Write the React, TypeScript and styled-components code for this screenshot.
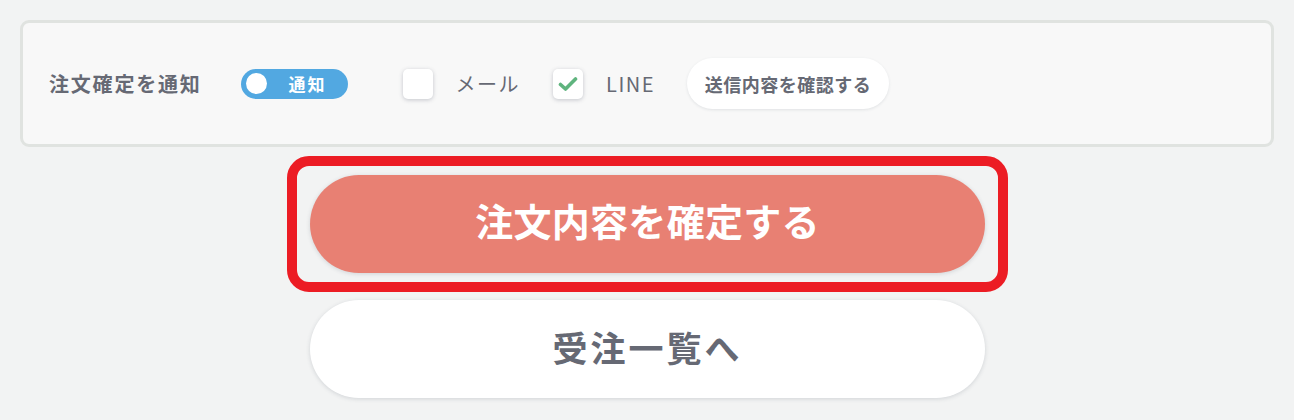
import React from 'react'
import styled, { createGlobalStyle } from 'styled-components'

const COLORS = {
  PAGE: '#f2f3f3',
  PANEL: '#f8f8f8',
  PANEL_BORDER: '#e0e3e0',
  TEXT: '#666974',
  BLUE: '#52a8e1',
  GREEN: '#5fb47e',
  SALMON: '#e88073',
  RED: '#ec1c24',
}

const GlobalStyle = createGlobalStyle`
  html, body {
    margin: 0;
    padding: 0;
    background: ${COLORS.PAGE};
    font-family: "Noto Sans CJK JP", "Noto Sans", sans-serif;
    color: ${COLORS.TEXT};
  }
`

const Page = styled.div`
  padding: 20px;
  display: flex;
  flex-direction: column;
  align-items: center;
`

const Panel = styled.div`
  box-sizing: border-box;
  width: 100%;
  height: 127px;
  display: flex;
  align-items: center;
  padding-left: 26px;
  background: ${COLORS.PANEL};
  border: 3px solid ${COLORS.PANEL_BORDER};
  border-radius: 9px;
`

const Label = styled.div`
  font-size: 20px;
  font-weight: 700;
  letter-spacing: 1.8px;
  margin-right: 39px;
`

const Toggle = styled.div`
  box-sizing: border-box;
  width: 107px;
  height: 30px;
  border-radius: 15px;
  background: ${COLORS.BLUE};
  display: flex;
  align-items: center;
  padding-left: 5px;
  margin-right: 55px;
`

const Knob = styled.div`
  width: 21px;
  height: 21px;
  border-radius: 50%;
  background: #fff;
`

const ToggleText = styled.div`
  color: #fff;
  font-size: 17px;
  font-weight: 700;
  letter-spacing: 2px;
  margin-left: 22px;
`

const Check = styled.div`
  width: 30px;
  height: 30px;
  border-radius: 5px;
  background: #fff;
  box-shadow: 0 1px 4px rgba(60, 70, 90, 0.28);
  display: flex;
  align-items: center;
  justify-content: center;
`

const CheckLabel = styled.div<{ gap: number }>`
  font-size: 20px;
  letter-spacing: 1.5px;
  margin-left: 23px;
  margin-right: ${(p) => p.gap}px;
`

const SmallButton = styled.button`
  box-sizing: border-box;
  width: 202px;
  height: 51px;
  border: none;
  border-radius: 26px;
  background: #fff;
  box-shadow: 0 1px 3px rgba(60, 70, 90, 0.12);
  font-family: inherit;
  font-size: 18px;
  font-weight: 700;
  letter-spacing: 0.5px;
  color: ${COLORS.TEXT};
  padding: 0;
`

const Highlight = styled.div`
  margin-top: 9px;
  border: 10px solid ${COLORS.RED};
  border-radius: 22px;
  padding: 9px 13px;
`

const BigButton = styled.button<{ primary?: boolean }>`
  display: block;
  width: 675px;
  height: 98px;
  border: none;
  border-radius: 49px;
  background: ${(p) => (p.primary ? COLORS.SALMON : '#fff')};
  color: ${(p) => (p.primary ? '#fff' : COLORS.TEXT)};
  box-shadow: 0 1px 4px rgba(60, 70, 90, 0.18);
  font-family: inherit;
  font-weight: 700;
  font-size: ${(p) => (p.primary ? 38 : 35)}px;
  letter-spacing: ${(p) => (p.primary ? 0.3 : 3)}px;
  padding: 0 0 ${(p) => (p.primary ? 10 : 6)}px 1px;
`

const SecondWrap = styled.div`
  margin-top: 8px;
`

const CheckMark = () => (
  <svg width="20" height="16" viewBox="0 0 20 16">
    <path d="M2.5 8.5 L7.5 13 L17.5 3" fill="none" stroke={COLORS.GREEN} strokeWidth="3.6" strokeLinecap="round" strokeLinejoin="round" />
  </svg>
)

export default function App() {
  return (
    <>
      <GlobalStyle />
      <Page>
        <Panel>
          <Label>注文確定を通知</Label>
          <Toggle>
            <Knob />
            <ToggleText>通知</ToggleText>
          </Toggle>
          <Check />
          <CheckLabel gap={33}>メール</CheckLabel>
          <Check>
            <CheckMark />
          </Check>
          <CheckLabel gap={32}>LINE</CheckLabel>
          <SmallButton>送信内容を確認する</SmallButton>
        </Panel>
        <Highlight>
          <BigButton primary>注文内容を確定する</BigButton>
        </Highlight>
        <SecondWrap>
          <BigButton>受注一覧へ</BigButton>
        </SecondWrap>
      </Page>
    </>
  )
}
